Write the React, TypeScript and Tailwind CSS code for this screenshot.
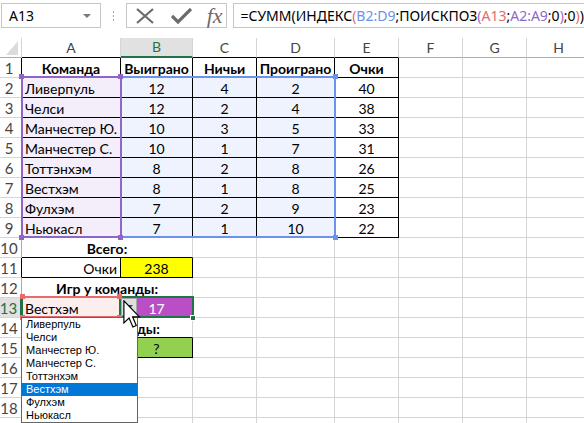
import React from 'react';

const colW = ['w-[22px]', 'w-[99px]', 'w-[72px]', 'w-[64px]', 'w-[78px]', 'w-[64px]', 'w-[64px]', 'w-[64px]', 'w-[64px]'];
const letters = ['', 'A', 'B', 'C', 'D', 'E', 'F', 'G', 'H'];

const teams: [string, number, number, number, number][] = [
  ['Ливерпуль', 12, 4, 2, 40],
  ['Челси', 12, 2, 4, 38],
  ['Манчестер Ю.', 10, 3, 5, 33],
  ['Манчестер С.', 10, 1, 7, 31],
  ['Тоттэнхэм', 8, 2, 8, 26],
  ['Вестхэм', 8, 1, 8, 25],
  ['Фулхэм', 7, 2, 9, 23],
  ['Ньюкасл', 7, 1, 10, 22],
];

// cells that carry a thin black border in the sheet
const boxed = (r: number, c: number) =>
  (r >= 1 && r <= 9 && c >= 1 && c <= 5) || (r === 11 && (c === 1 || c === 2)) || (r === 15 && c === 2);

type Cell = { text?: string; span?: number; cls?: string };

function rowCells(r: number): Cell[] {
  const empty = (n: number) => Array.from({ length: n }, () => ({}));
  if (r === 1)
    return [
      { text: 'Команда', cls: 'font-bold justify-center' },
      { text: 'Выиграно', cls: 'font-bold justify-center' },
      { text: 'Ничьи', cls: 'font-bold justify-center' },
      { text: 'Проиграно', cls: 'font-bold justify-center' },
      { text: 'Очки', cls: 'font-bold justify-center' },
      ...empty(3),
    ];
  if (r >= 2 && r <= 9) {
    const t = teams[r - 2];
    return [
      { text: t[0], cls: 'pl-[3px] bg-[#f3eefa]' },
      { text: String(t[1]), cls: 'justify-center bg-[#eef3fd]' },
      { text: String(t[2]), cls: 'justify-center bg-[#eef3fd]' },
      { text: String(t[3]), cls: 'justify-center bg-[#eef3fd]' },
      { text: String(t[4]), cls: 'justify-center' },
      ...empty(3),
    ];
  }
  if (r === 10) return [{ text: 'Всего:', span: 2, cls: 'font-bold justify-center' }, ...empty(6)];
  if (r === 11)
    return [
      { text: 'Очки', cls: 'justify-end pr-[3px]' },
      { text: '238', cls: 'justify-center bg-[#ffff00]' },
      ...empty(6),
    ];
  if (r === 12) return [{ text: 'Игр у команды:', span: 2, cls: 'font-bold justify-center' }, ...empty(6)];
  if (r === 13)
    return [
      { text: 'Вестхэм', cls: 'pl-[3px] bg-[#fdeeee]' },
      { text: '17', cls: 'justify-center bg-[#b94ec7] text-white' },
      ...empty(6),
    ];
  // row 14 label is mostly hidden by the open list; only its tail shows
  if (r === 14) return [{}, { text: 'ды:', cls: 'font-bold pl-[16px]' }, ...empty(6)];
  if (r === 15) return [{}, { text: '?', cls: 'justify-center bg-[#92d050]' }, ...empty(6)];
  return empty(8);
}

const mergedW = 'w-[171px]';

function Handle({ cls }: { cls: string }) {
  return <div className={`absolute h-[5px] w-[5px] ${cls}`} />;
}

function FormulaBar() {
  return (
    <div className="flex h-[38px] items-start pt-[3px] font-['Noto_Sans',sans-serif] text-[14px] text-black">
      <div className="relative ml-[1px] flex h-[25px] w-[106px] items-center border border-[#c6c6c6] pl-[7px]">
        <span className="text-[14px]">A13</span>
        <svg className="absolute right-[9px] top-[10px]" width="8" height="4" viewBox="0 0 8 4">
          <path d="M0 0h8L4 4z" fill="#7a7a7a" />
        </svg>
      </div>
      <div className="flex h-[25px] w-[26px] flex-col items-center justify-center gap-[2px]">
        <div className="h-[2px] w-[1px] bg-[#a8a8a8]" />
        <div className="h-[2px] w-[1px] bg-[#a8a8a8]" />
        <div className="h-[2px] w-[1px] bg-[#a8a8a8]" />
      </div>
      <div className="flex h-[25px] w-[107px] items-center border border-[#c6c6c6]">
        <svg className="ml-[8px]" width="20" height="16" viewBox="0 0 20 16">
          <path d="M2 1 L18 15 M18 1 L2 15" stroke="#6b6b6b" strokeWidth="2.2" />
        </svg>
        <svg className="ml-[16px]" width="21" height="16" viewBox="0 0 21 16">
          <path d="M1 8 L7 14 L20 1" stroke="#6b6b6b" strokeWidth="3.2" fill="none" />
        </svg>
        <span className="ml-[15px] font-['Liberation_Serif',serif] text-[22px] italic leading-none text-[#6b6b6b]">fx</span>
      </div>
      <div className="ml-[6px] flex h-[25px] flex-1 items-center border-y border-l border-[#c6c6c6] pl-[7px] whitespace-nowrap">
        <span>=СУММ(ИНДЕКС</span>
        <span className="text-[#e46c6c]">(</span>
        <span className="text-[#6d92e8]">B2:D9</span>
        <span>;ПОИСКПОЗ</span>
        <span className="text-[#b15fc9]">(</span>
        <span className="text-[#e46c6c]">A13</span>
        <span>;</span>
        <span className="text-[#9068c4]">A2:A9</span>
        <span>;0</span>
        <span className="text-[#b15fc9]">)</span>
        <span>;0</span>
        <span className="text-[#e46c6c]">)</span>
        <span>)</span>
      </div>
    </div>
  );
}

function HeaderRow() {
  return (
    <div className="flex h-[20px]">
      {letters.map((l, c) => {
        const active = c === 2;
        const bottom = active
          ? 'border-b-2 border-b-[#217346]'
          : boxed(1, c)
            ? 'border-b border-b-black'
            : 'border-b border-b-[#ababab]';
        return (
          <div
            key={c}
            className={`relative flex shrink-0 items-center justify-center border-r border-r-[#d5d5d5] ${colW[c]} ${bottom} ${
              active ? 'bg-[#e1e1e1] text-[#217346]' : 'text-[#444]'
            }`}
          >
            {c === 0 ? (
              <svg className="absolute left-[6px] top-[3px]" width="12" height="14" viewBox="0 0 12 14">
                <path d="M12 0 V14 H0 Z" fill="#dcdcdc" />
              </svg>
            ) : (
              l
            )}
          </div>
        );
      })}
    </div>
  );
}

function SheetRow({ r }: { r: number }) {
  const cells = rowCells(r);
  let c = 1;
  const rowActive = r === 13;
  return (
    <div className="flex h-[20px]">
      <div
        className={`flex shrink-0 items-center justify-center pr-[3px] pt-[1px] text-[15px] ${colW[0]} border-b border-b-[#d5d5d5] ${
          rowActive
            ? 'border-r-2 border-r-[#217346] bg-[#e1e1e1] text-[#217346]'
            : boxed(r, 1)
              ? 'border-r border-r-black text-[#444]'
              : 'border-r border-r-[#ababab] text-[#444]'
        }`}
      >
        {r}
      </div>
      {cells.map((cell, i) => {
        const start = c;
        const span = cell.span ?? 1;
        c += span;
        const end = start + span - 1;
        const right = boxed(r, end) || boxed(r, end + 1) ? 'border-r-black' : 'border-r-[#d5d5d5]';
        const bottomBlack = Array.from({ length: span }, (_, k) => start + k).some(
          (cc) => boxed(r, cc) || boxed(r + 1, cc),
        );
        const bottom = bottomBlack ? 'border-b-black' : 'border-b-[#d5d5d5]';
        const w = span === 2 ? mergedW : colW[start];
        return (
          <div
            key={i}
            className={`flex shrink-0 items-center overflow-visible whitespace-nowrap border-r border-b pt-[2px] ${w} ${right} ${bottom} ${
              cell.cls ?? ''
            }`}
          >
            {cell.text}
          </div>
        );
      })}
    </div>
  );
}

function Cursor() {
  return (
    <svg className="absolute left-[123px] top-[262px]" width="18" height="28" viewBox="0 0 12 19">
      <path
        d="M0.5 0.5 L0.5 15.5 L4 12.2 L6.6 18.3 L8.9 17.3 L6.4 11.4 L11 11.4 Z"
        fill="#fff"
        stroke="#000"
        strokeWidth="0.8"
        strokeLinejoin="miter"
      />
    </svg>
  );
}

export default function App() {
  const list = ['Ливерпуль', 'Челси', 'Манчестер Ю.', 'Манчестер С.', 'Тоттэнхэм', 'Вестхэм', 'Фулхэм', 'Ньюкасл'];
  return (
    <div className="h-[423px] w-[584px] overflow-hidden bg-white">
      <FormulaBar />
      <div className="relative font-['Lato',sans-serif] text-[14px] leading-none text-black">
        <HeaderRow />
        {Array.from({ length: 19 }, (_, i) => (
          <SheetRow key={i} r={i + 1} />
        ))}

        {/* B2:D9 reference (blue) */}
        <div className="absolute left-[120px] top-[38px] h-[162px] w-[216px] border-2 border-[#6b93ee]" />
        {/* A2:A9 reference (purple) */}
        <div className="absolute left-[21px] top-[38px] h-[162px] w-[101px] border-2 border-[#8f66c6]" />
        <Handle cls="left-[19px] top-[36px] bg-[#8f66c6]" />
        <Handle cls="left-[118px] top-[36px] bg-[#8f66c6]" />
        <Handle cls="left-[19px] top-[197px] bg-[#8f66c6]" />
        <Handle cls="left-[118px] top-[197px] bg-[#8f66c6]" />
        <Handle cls="left-[333px] top-[36px] bg-[#6b93ee]" />
        <Handle cls="left-[333px] top-[197px] bg-[#6b93ee]" />

        {/* selection A13:B13 */}
        <div className="absolute left-[21px] top-[258px] h-[22px] w-[173px] border-2 border-[#217346]" />
        <div className="absolute left-[119px] top-[258px] h-[22px] w-[2px] bg-[#217346]" />
        <div className="absolute left-[190px] top-[277px] h-[6px] w-[6px] border border-white bg-[#217346]" />
        {/* A13 reference (red) */}
        <div className="absolute left-[23px] top-[258px] h-[22px] w-[96px] border-y-2 border-[#e46c6c]" />
        <Handle cls="left-[20px] top-[256px] bg-[#e46c6c]" />
        <Handle cls="left-[117px] top-[256px] bg-[#e46c6c]" />
        <Handle cls="left-[20px] top-[277px] bg-[#e46c6c]" />
        <Handle cls="left-[117px] top-[277px] bg-[#e46c6c]" />

        {/* dropdown button */}
        <div className="absolute left-[121px] top-[260px] flex h-[18px] w-[16px] items-center justify-center border border-[#a9a9a9] bg-[#dedede]">
          <svg width="7" height="4" viewBox="0 0 7 4">
            <path d="M0 0h7L3.5 4z" fill="#444" />
          </svg>
        </div>

        {/* validation list */}
        <div className="absolute left-[21px] top-[279px] w-[117px] border border-[#646464] bg-white font-['Liberation_Sans',sans-serif] text-[11px] leading-[13px]">
          {list.map((t) => (
            <div key={t} className={`h-[13px] pl-[4px] ${t === 'Вестхэм' ? 'bg-[#0078d7] text-white' : 'text-black'}`}>
              {t}
            </div>
          ))}
        </div>

        <Cursor />
      </div>
    </div>
  );
}
